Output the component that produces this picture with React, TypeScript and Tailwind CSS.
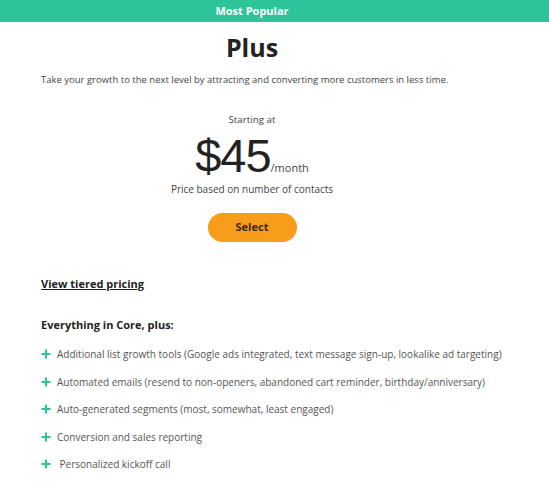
import React from 'react';

const features = [
    'Additional list growth tools (Google ads integrated, text message sign-up, lookalike ad targeting)',
    'Automated emails (resend to non-openers, abandoned cart reminder, birthday/anniversary)',
    'Auto-generated segments (most, somewhat, least engaged)',
    'Conversion and sales reporting',
    '\u00a0Personalized kickoff call',
];

const PlusIcon: React.FC = () => (
    <svg width="10" height="10" viewBox="0 0 10 10" className="shrink-0">
        <path d="M5 0.5v9M0.5 5h9" stroke="#2ec49a" strokeWidth="2.2" />
    </svg>
);

export default function App() {
    return (
        <div className="w-[549px] h-[500px] bg-white font-['Open_Sans',sans-serif] overflow-hidden">
            <div className="w-full h-[22px] bg-[#2ec49a]">
                <div className="w-[504px] h-full flex items-center justify-center text-white text-[11px] font-bold">
                    Most Popular
                </div>
            </div>

            <div className="w-[504px] px-[41px] flex flex-col">
                <h1 className="mt-[10px] text-center text-[25px] leading-[30px] font-bold text-[#222]">Plus</h1>
                <p className="mt-[11px] text-[9.5px] leading-[14px] text-[#444] whitespace-nowrap">
                    Take your growth to the next level by attracting and converting more customers in less time.
                </p>

                <div className="mt-[27px] flex flex-col items-center">
                    <span className="text-[9.8px] leading-[12px] text-[#444]">Starting at</span>
                    <div className="mt-[8px] flex items-baseline text-[#222]">
                        <span className="font-['Liberation_Sans',sans-serif] text-[47px] leading-[44px] tracking-[-1px]">$45</span>
                        <span className="text-[11px] text-[#444]">/month</span>
                    </div>
                    <span className="mt-[5px] text-[10px] leading-[12px] text-[#444]">Price based on number of contacts</span>
                    <button className="mt-[18px] w-[89px] h-[29px] rounded-full bg-[#f89c1c] text-[11px] font-bold text-[#3a2a1a]">
                        Select
                    </button>
                </div>

                <a className="mt-[35px] self-start text-[11px] leading-[14px] font-bold text-[#222] underline">
                    View tiered pricing
                </a>

                <h2 className="mt-[27px] text-[11px] leading-[14px] font-bold text-[#222]">Everything in Core, plus:</h2>

                <ul className="mt-[15px] flex flex-col gap-[13.5px]">
                    {features.map((f) => (
                        <li key={f} className="flex items-center gap-[6px] text-[10px] leading-[14px] text-[#555] whitespace-nowrap">
                            <PlusIcon />
                            <span>{f}</span>
                        </li>
                    ))}
                </ul>
            </div>
        </div>
    );
}
